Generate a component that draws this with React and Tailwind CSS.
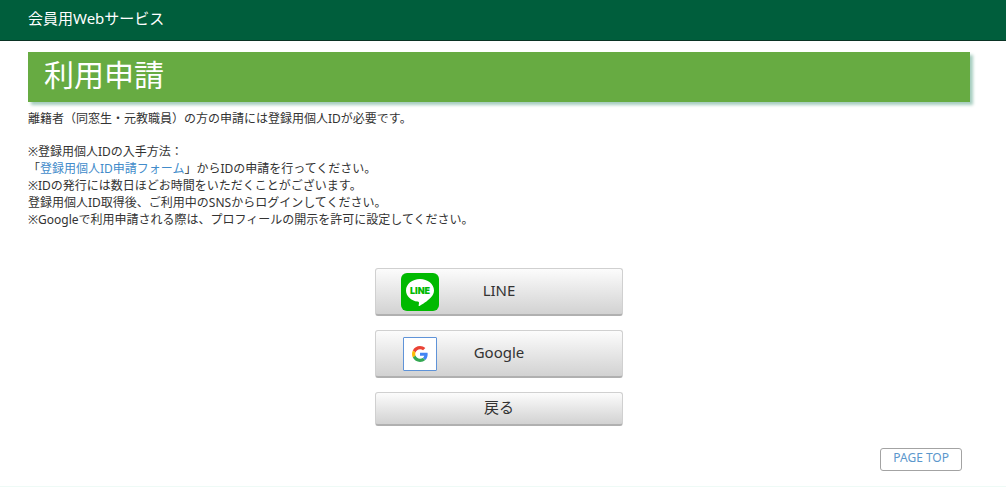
import React from 'react';

const LineIcon = () => (
  <svg viewBox="0 0 38 38" className="h-[38px] w-[38px]" aria-hidden="true">
    <rect width="38" height="38" rx="6" fill="#00b900" />
    <path
      d="M19 6C11.300 6 5 11.100 5 17.400c0 5.600 5 10.300 11.700 11.200.5.1 1.100.3 1.200.7.2.4.1 1 0 1.400l-.2 1.200c-.1.4-.3 1.400 1.200.8s8-4.700 10.900-8.100c2-2.200 3.200-4.500 3.200-7.200C33 11.100 26.700 6 19 6z"
      fill="#fff"
    />
    <text
      x="19"
      y="21"
      textAnchor="middle"
      fontSize="9"
      fontWeight="900"
      fontFamily="Inter, sans-serif"
      fill="#00b900"
    >
      LINE
    </text>
  </svg>
);

const GoogleIcon = () => (
  <span className="flex h-[34px] w-[34px] items-center justify-center rounded-[1px] border border-[#5f93d8] bg-white">
    <svg viewBox="0 0 48 48" className="h-4 w-4" aria-hidden="true">
      <path fill="#EA4335" d="M24 9.500c3.540 0 6.710 1.220 9.210 3.600l6.850-6.850C35.900 2.380 30.470 0 24 0 14.620 0 6.510 5.380 2.560 13.220l7.980 6.190C12.430 13.720 17.740 9.500 24 9.500z" />
      <path fill="#4285F4" d="M46.980 24.550c0-1.570-.15-3.090-.38-4.550H24v9.020h12.940c-.58 2.960-2.260 5.480-4.780 7.180l7.730 6c4.510-4.180 7.090-10.360 7.090-17.650z" />
      <path fill="#FBBC05" d="M10.530 28.590c-.48-1.450-.76-2.990-.76-4.590s.27-3.140.76-4.590l-7.980-6.190C.92 16.460 0 20.120 0 24c0 3.880.92 7.540 2.560 10.780l7.970-6.190z" />
      <path fill="#34A853" d="M24 48c6.480 0 11.930-2.130 15.890-5.810l-7.730-6c-2.150 1.450-4.920 2.300-8.160 2.300-6.260 0-11.570-4.220-13.470-9.910l-7.980 6.190C6.510 42.620 14.620 48 24 48z" />
    </svg>
  </span>
);

const buttonStyle =
  'w-full rounded-[3px] border border-[#d0d0d0] border-b-2 border-b-[#b0b0b0] bg-linear-to-b from-[#fcfcfc] to-[#d2d2d2] text-[15px] leading-5 text-[#333]';

const SnsButton = ({ icon, label }) => (
  <button type="button" className={`${buttonStyle} grid h-12 grid-cols-[88px_1fr_88px] items-center`}>
    <span className="flex justify-center">{icon}</span>
    <span className="pb-1">{label}</span>
  </button>
);

const App = () => {
  return (
    <div className="flex min-h-screen flex-col border-b border-[#eefaf6] bg-white font-['Noto_Sans','Noto_Sans_CJK_JP',sans-serif] text-[#333]">
      <header className="border-b border-[#0a3324] bg-[#005e3c] px-7 pt-2 pb-3">
        <p className="text-[15px] leading-5 text-white">会員用Webサービス</p>
      </header>

      <main className="pt-[11px] pr-9 pl-7">
        <h1 className="bg-[#67ab42] px-4 pt-1 pb-2 text-[30px] leading-[38px] text-white shadow-[3px_3px_3px_#a6cdbf]">
          利用申請
        </h1>

        <div className="mt-2 text-xs leading-[17px]">
          <p>離籍者（同窓生・元教職員）の方の申請には登録用個人IDが必要です。</p>
          <p className="mt-4">
            ※登録用個人IDの入手方法：
            <br />
            「<a href="#apply" className="text-[#428bca]">登録用個人ID申請フォーム</a>」からIDの申請を行ってください。
            <br />
            ※IDの発行には数日ほどお時間をいただくことがございます。
            <br />
            登録用個人ID取得後、ご利用中のSNSからログインしてください。
            <br />
            ※Googleで利用申請される際は、プロフィールの開示を許可に設定してください。
          </p>
        </div>

        <div className="mx-auto mt-10 flex w-[248px] flex-col gap-[14px]">
          <SnsButton icon={<LineIcon />} label="LINE" />
          <SnsButton icon={<GoogleIcon />} label="Google" />
          <button type="button" className={`${buttonStyle} h-[34px] pb-1`}>
            戻る
          </button>
        </div>
      </main>

      <footer className="mt-[22px] flex justify-end pr-11">
        <a
          href="#root"
          className="rounded-[3px] border border-[#a3a3a3] px-3 pt-px pb-1 text-xs leading-4 text-[#5b97cc]"
        >
          PAGE TOP
        </a>
      </footer>
    </div>
  );
};

export default App;
